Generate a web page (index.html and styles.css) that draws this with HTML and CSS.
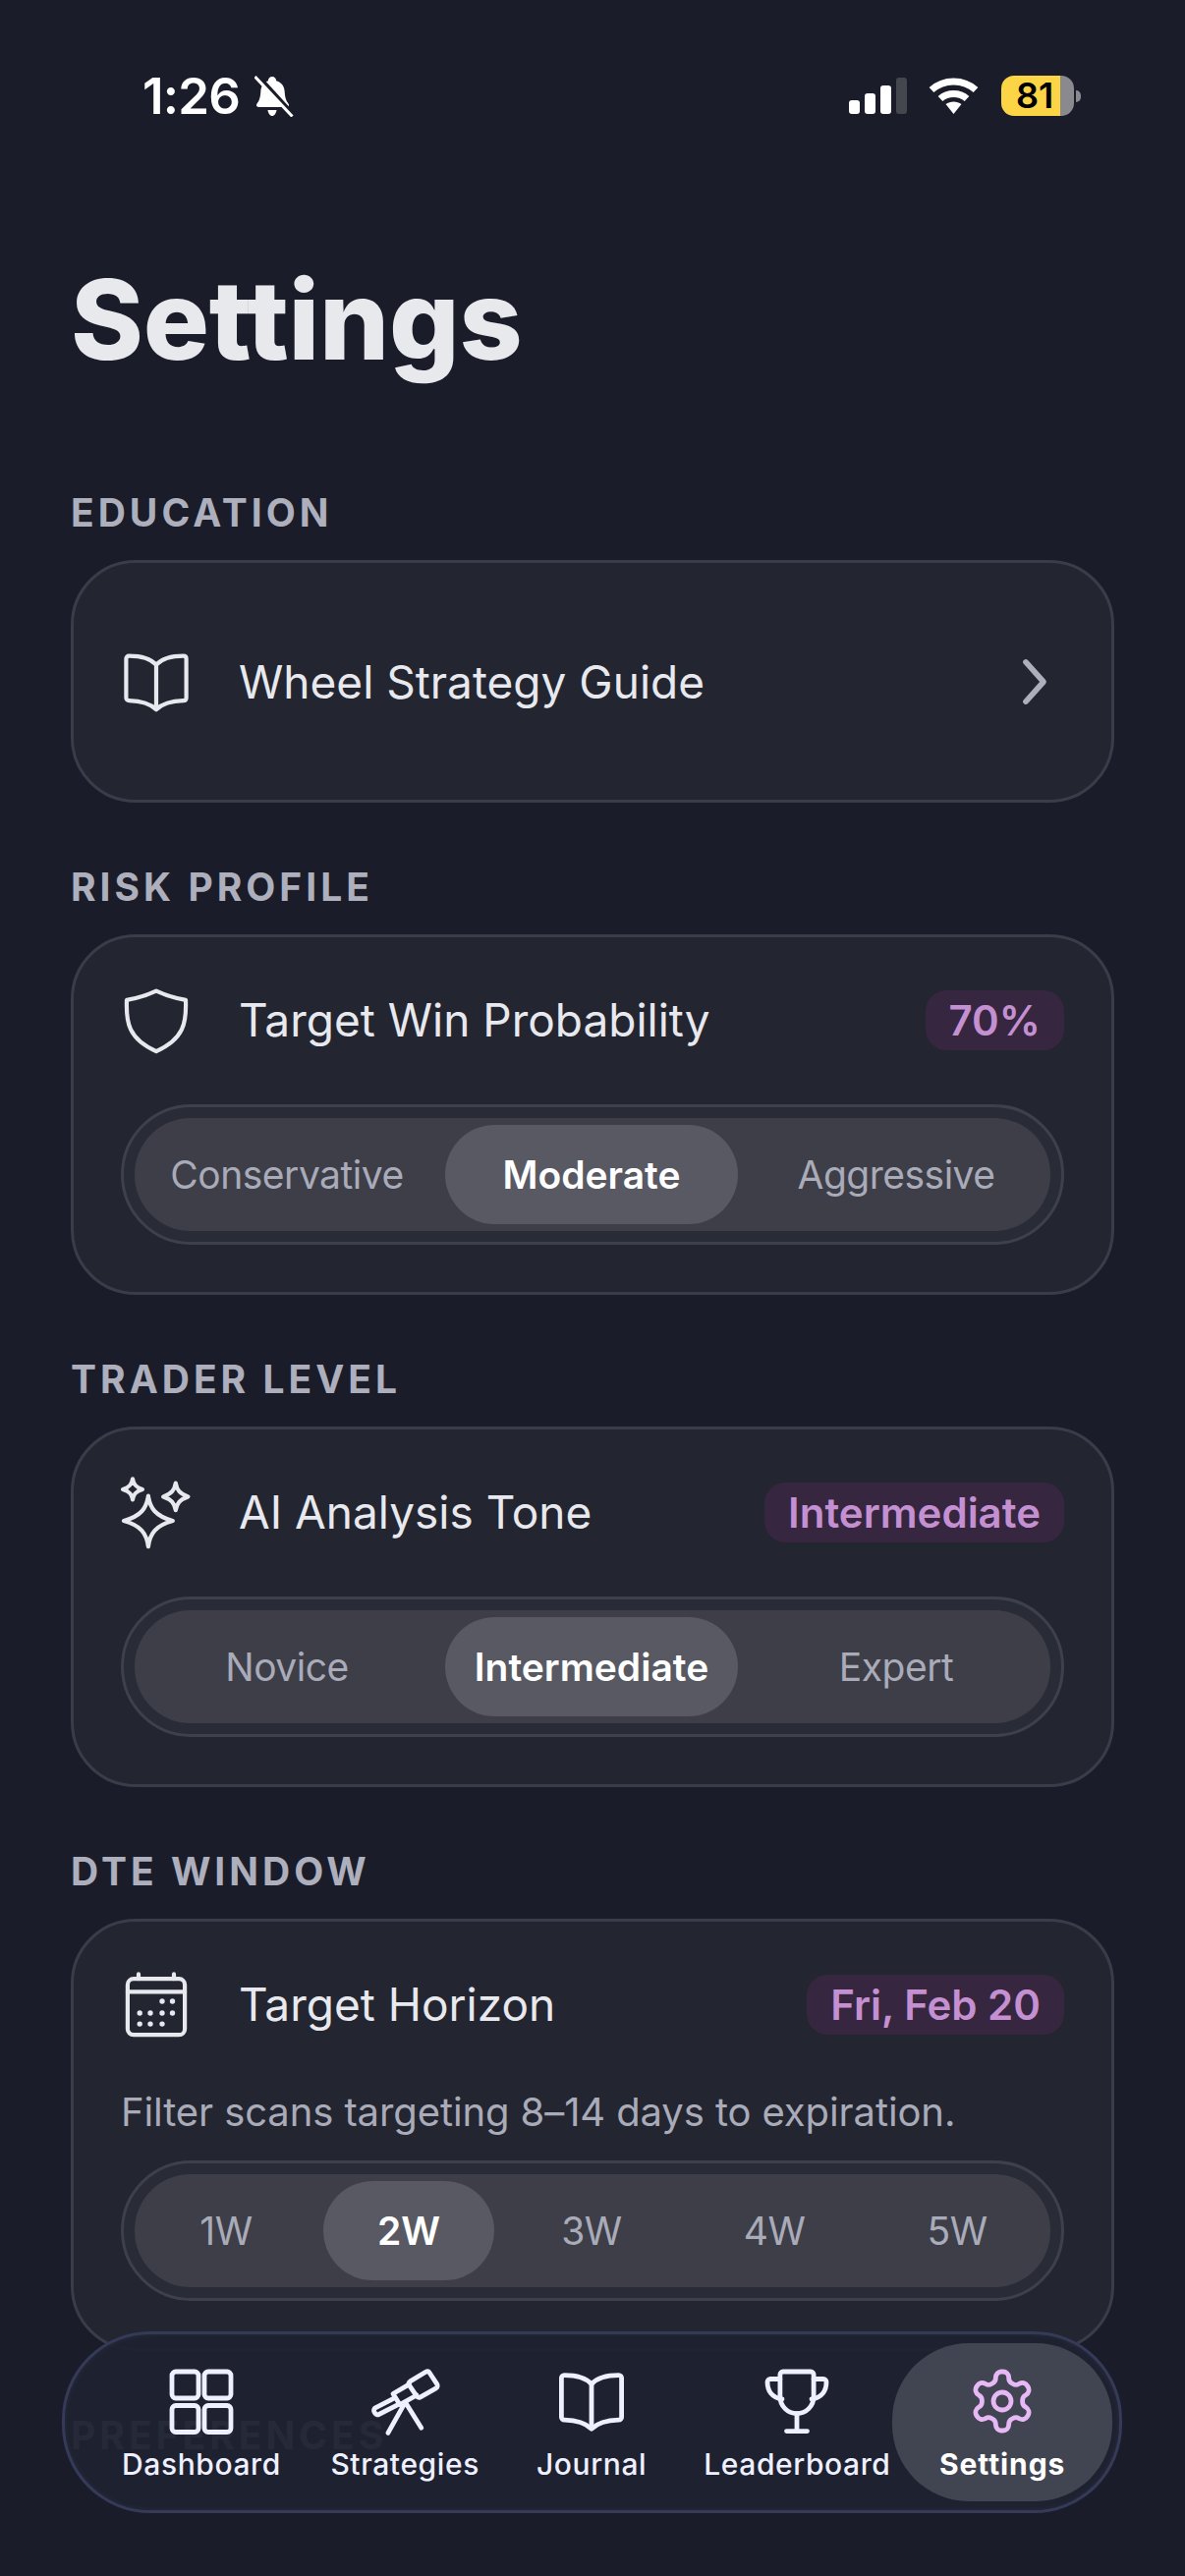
FILE: index.html
```html
<!DOCTYPE html>
<html>
<head>
    <meta charset="UTF-8"/>
    <title>Settings</title>
    <link rel="stylesheet" href="styles.css">
</head>
<body>
<div class="screen">

    <!-- status bar -->
    <div class="status">
        <div class="status-left">
            <span class="time">1:26</span>
            <svg class="bell" viewBox="0 0 40 42">
                <path class="bell-body" d="M18 1c-2.400 0-4 1.800-4.200 4.200C8.800 7 6.600 11 6.300 16.500c-.3 5-1 8.600-3.800 12.100-1.200 1.600-.4 3.400 1.600 3.400h28.800c2 0 2.800-1.800 1.600-3.400-2.800-3.500-3.500-7.100-3.800-12.100C30.400 11 28 7 22.200 5.200 22 2.800 20.400 1 18 1zM13.500 35c.4 3.300 2.300 6 4.500 6s4.100-2.700 4.500-6z"/>
                <path class="bell-cut" d="M3.500 0L41 41"/>
                <path class="bell-line" d="M.5 1l38 40.500"/>
            </svg>
        </div>
        <div class="status-right">
            <div class="signal">
                <span class="bar bar-1"></span>
                <span class="bar bar-2"></span>
                <span class="bar bar-3"></span>
                <span class="bar bar-4"></span>
            </div>
            <svg class="wifi" viewBox="0 0 51 37">
                <path d="M3 12.500C15.500 1 35.500 1 48 12.500" class="wifi-arc"/>
                <path d="M12 21.500c7.500-6.700 19.500-6.700 27 0" class="wifi-arc"/>
                <path d="M25.500 37l-8-10c4.500-3.500 11.500-3.500 16 0z" fill="#fff"/>
            </svg>
            <div class="battery">
                <div class="battery-body">81</div>
                <span class="battery-nub"></span>
            </div>
        </div>
    </div>

    <h1 class="title">Settings</h1>

    <div class="section">
        <div class="section-label">EDUCATION</div>
        <div class="card card-link">
            <div class="row">
                <svg class="icon" viewBox="0 0 24 24">
                    <path d="M1.800 4.200c0-.6.400-1 1-1 3.800 0 7 .6 9.200 3 2.200-2.400 5.400-3 9.200-3 .6 0 1 .4 1 1v13.200c0 .6-.4 1-1 1-3.800.1-6.800.7-9.200 3-2.400-2.300-5.400-2.900-9.200-3-.6 0-1-.4-1-1z"/>
                    <path d="M12 6.200v15"/>
                </svg>
                <span class="row-title">Wheel Strategy Guide</span>
                <svg class="chevron" viewBox="0 0 20 20"><path d="M7 3.300L13 10l-6 6.700"/></svg>
            </div>
        </div>
    </div>

    <div class="section">
        <div class="section-label">RISK PROFILE</div>
        <div class="card">
            <div class="row">
                <svg class="icon" viewBox="0 0 24 24">
                    <path d="M12 2.200c3 1.400 6 2.400 10 3.100.3 7.700-.6 13.200-10 17.400C2.600 18.500 1.700 13 2 5.300c4-.7 7-1.700 10-3.100z"/>
                </svg>
                <span class="row-title">Target Win Probability</span>
                <span class="badge">70%</span>
            </div>
            <div class="seg">
                <div class="seg-track">
                    <span class="seg-item">Conservative</span>
                    <span class="seg-item active">Moderate</span>
                    <span class="seg-item">Aggressive</span>
                </div>
            </div>
        </div>
    </div>

    <div class="section">
        <div class="section-label">TRADER LEVEL</div>
        <div class="card">
            <div class="row">
                <svg class="icon" viewBox="0 0 24 24">
                    <path d="M9.300 6.500c.6 4.300 2.500 6.900 8.300 8.500-5.800 1.600-7.700 4.200-8.300 8.700-.6-4.500-2.500-7.100-8.300-8.700 5.800-1.600 7.700-4.200 8.300-8.500z"/>
                    <path d="M4 .8c.3 1.800 1 2.800 3.300 3.500C5 5 4.300 6 4 7.800 3.700 6 3 5 .7 4.300 3 3.600 3.700 2.600 4 .8z"/>
                    <path d="M18.600 2.200c.4 2.300 1.300 3.600 4.200 4.600-2.900 1-3.800 2.300-4.200 4.600-.4-2.300-1.300-3.600-4.200-4.600 2.900-1 3.800-2.300 4.200-4.600z"/>
                </svg>
                <span class="row-title">AI Analysis Tone</span>
                <span class="badge">Intermediate</span>
            </div>
            <div class="seg">
                <div class="seg-track">
                    <span class="seg-item">Novice</span>
                    <span class="seg-item active">Intermediate</span>
                    <span class="seg-item">Expert</span>
                </div>
            </div>
        </div>
    </div>

    <div class="section">
        <div class="section-label">DTE WINDOW</div>
        <div class="card">
            <div class="row">
                <svg class="icon" viewBox="0 0 24 24">
                    <rect x="2.300" y="3.400" width="19.400" height="19" rx="2"/>
                    <path d="M2.300 7.800h19.400M6 1.800v1.600M18 1.800v1.600"/>
                    <g class="dots">
                        <circle cx="14" cy="11" r=".9"/><circle cx="17.500" cy="11" r=".9"/>
                        <circle cx="6.400" cy="15" r=".9"/><circle cx="10" cy="15" r=".9"/><circle cx="14" cy="15" r=".9"/><circle cx="17.500" cy="15" r=".9"/>
                        <circle cx="6.400" cy="18.700" r=".9"/><circle cx="10" cy="18.700" r=".9"/><circle cx="14" cy="18.700" r=".9"/>
                    </g>
                </svg>
                <span class="row-title">Target Horizon</span>
                <span class="badge">Fri, Feb 20</span>
            </div>
            <p class="hint">Filter scans targeting 8–14 days to expiration.</p>
            <div class="seg">
                <div class="seg-track">
                    <span class="seg-item">1W</span>
                    <span class="seg-item active">2W</span>
                    <span class="seg-item">3W</span>
                    <span class="seg-item">4W</span>
                    <span class="seg-item">5W</span>
                </div>
            </div>
        </div>
    </div>

    <div class="section">
        <div class="section-label">PREFERENCES</div>
    </div>

    <!-- floating tab bar -->
    <nav class="tabbar">
        <a class="tab">
            <svg class="tab-icon" viewBox="0 0 24 24">
                <rect x="2" y="2" width="9" height="9" rx="1.300"/>
                <rect x="13" y="2" width="9" height="9" rx="1.300"/>
                <rect x="2" y="13.500" width="9" height="9" rx="1.300"/>
                <rect x="13" y="13.500" width="9" height="9" rx="1.300"/>
            </svg>
            <span>Dashboard</span>
        </a>
        <a class="tab">
            <svg class="tab-icon" viewBox="0 0 24 24">
                <path d="M13.800 5.300l5.300-3.200a1 1 0 0 1 1.300.3l2.500 3.800a1 1 0 0 1-.3 1.400l-5.300 3a1 1 0 0 1-1.300-.3l-2.500-3.700a1 1 0 0 1 .3-1.300z"/>
                <path d="M13.500 6.300L8 9.500l2.300 3.700 5.700-3.200"/>
                <path d="M8 11.200l-6 3.100a1 1 0 0 0-.4 1.300l.3.500a1 1 0 0 0 1.300.4l6.300-3.200"/>
                <path d="M12 12.600L6.300 22.800M12.300 12.600l5.300 8.500"/>
            </svg>
            <span>Strategies</span>
        </a>
        <a class="tab">
            <svg class="tab-icon" viewBox="0 0 24 24">
                <path d="M1.800 4.200c0-.6.400-1 1-1 3.800 0 7 .6 9.200 3 2.200-2.400 5.400-3 9.200-3 .6 0 1 .4 1 1v13.200c0 .6-.4 1-1 1-3.800.1-6.800.7-9.200 3-2.400-2.300-5.400-2.900-9.200-3-.6 0-1-.4-1-1z"/>
                <path d="M12 6.200v15"/>
            </svg>
            <span>Journal</span>
        </a>
        <a class="tab">
            <svg class="tab-icon" viewBox="0 0 24 24">
                <path d="M6.300 3a1 1 0 0 1 1-1h9.400a1 1 0 0 1 1 1v7.500a5.700 5.700 0 0 1-11.400 0z"/>
                <path d="M6.300 4.500H3a1 1 0 0 0-1 1c0 3 1.500 5.300 5 5.800M17.700 4.500H21a1 1 0 0 1 1 1c0 3-1.500 5.300-5 5.800"/>
                <path d="M12 16.200v5.800M8.500 22.200h7"/>
            </svg>
            <span>Leaderboard</span>
        </a>
        <a class="tab tab-active">
            <svg class="tab-icon" viewBox="0 0 24 24">
                <path d="M12.220 2h-.44a2 2 0 0 0-2 2v.18a2 2 0 0 1-1 1.730l-.43.250a2 2 0 0 1-2 0l-.15-.080a2 2 0 0 0-2.730.730l-.22.380a2 2 0 0 0 .730 2.730l.15.100a2 2 0 0 1 1 1.720v.510a2 2 0 0 1-1 1.740l-.15.090a2 2 0 0 0-.730 2.730l.22.380a2 2 0 0 0 2.730.730l.15-.080a2 2 0 0 1 2 0l.43.250a2 2 0 0 1 1 1.730V20a2 2 0 0 0 2 2h.44a2 2 0 0 0 2-2v-.18a2 2 0 0 1 1-1.730l.43-.250a2 2 0 0 1 2 0l.15.080a2 2 0 0 0 2.730-.730l.22-.390a2 2 0 0 0-.730-2.730l-.15-.080a2 2 0 0 1-1-1.740v-.5a2 2 0 0 1 1-1.740l.15-.090a2 2 0 0 0 .730-2.730l-.22-.380a2 2 0 0 0-2.730-.730l-.15.080a2 2 0 0 1-2 0l-.43-.250a2 2 0 0 1-1-1.730V4a2 2 0 0 0-2-2z"/>
                <circle cx="12" cy="12" r="3"/>
            </svg>
            <span>Settings</span>
        </a>
    </nav>
</div>
</body>
</html>
```

FILE: styles.css
```css
* {
    box-sizing: border-box;
}

body {
    margin: 0;
    background: #1a1d29;
    font-family: Inter, "Noto Sans", sans-serif;
    color: #e8e9ee;
}

.screen {
    position: relative;
    width: 1206px;
    height: 2622px;
    overflow: hidden;
    padding: 0 72px;
}

/* status bar */
.status {
    display: flex;
    justify-content: space-between;
    align-items: center;
    height: 41px;
    margin: 77px 34px 0 73px;
}

.status-left {
    display: flex;
    align-items: center;
    gap: 15px;
}

.time {
    font-size: 51px;
    font-weight: 600;
    line-height: 41px;
    color: #fff;
    letter-spacing: -0.8px;
}

.bell {
    width: 40px;
    height: 42px;
}

.bell-body {
    fill: #fff;
}

.bell-cut {
    stroke: #1a1d29;
    stroke-width: 4;
}

.bell-line {
    stroke: #fff;
    stroke-width: 3;
}

.status-right {
    display: flex;
    align-items: center;
}

.signal {
    display: flex;
    align-items: flex-end;
    gap: 5px;
    height: 37px;
    margin-right: 22px;
}

.bar {
    width: 11px;
    border-radius: 3px;
    background: #fff;
}

.bar-1 { height: 14px; }
.bar-2 { height: 21px; }
.bar-3 { height: 29px; }
.bar-4 { height: 37px; background: #45474f; }

.wifi {
    width: 51px;
    height: 37px;
    margin-right: 23px;
}

.wifi-arc {
    fill: none;
    stroke: #fff;
    stroke-width: 7;
}

.battery {
    display: flex;
    align-items: center;
    gap: 2px;
}

.battery-body {
    width: 74px;
    height: 41px;
    padding-left: 15px;
    border-radius: 13px;
    background: linear-gradient(90deg, #fbd545 60px, #8a8a8e 60px);
    font-size: 36px;
    font-weight: 600;
    line-height: 41px;
    color: #000;
}

.battery-nub {
    width: 5px;
    height: 12px;
    border-radius: 0 5px 5px 0;
    background: #8a8a8e;
}

/* title */
.title {
    margin: 0 0 113px;
    padding-top: 147px;
    font-size: 112px;
    font-weight: 800;
    line-height: 120px;
    letter-spacing: -0.2px;
    color: #e8e9ed;
}

.section {
    margin-bottom: 62px;
}

.section-label {
    margin-bottom: 24px;
    font-size: 39px;
    font-weight: 700;
    line-height: 48px;
    letter-spacing: 4px;
    color: #adafbd;
}

.card {
    padding: 48px;
    border: 3px solid #3a3c49;
    border-radius: 66px;
    background: #232530;
}

.card-link {
    padding-top: 84.5px;
    padding-bottom: 84.5px;
}

.row {
    display: flex;
    align-items: center;
    height: 72px;
}

.icon {
    flex: none;
    width: 72px;
    height: 72px;
    margin-right: 48px;
    fill: none;
    stroke: #e8e9ee;
    stroke-width: 1.400;
    stroke-linecap: round;
    stroke-linejoin: round;
    overflow: visible;
}

.dots {
    fill: #e8e9ee;
    stroke: none;
}

.row-title {
    flex: 1;
    font-size: 46px;
    font-weight: 400;
}

.chevron {
    width: 60px;
    height: 60px;
    fill: none;
    stroke: #adafbd;
    stroke-width: 1.900;
    stroke-linecap: round;
    stroke-linejoin: round;
}

.badge {
    height: 61px;
    padding: 0 24px;
    border-radius: 21px;
    background: #36263f;
    font-size: 42px;
    font-weight: 600;
    line-height: 61px;
    color: #c490d1;
}

.hint {
    margin: 50px 0 0;
    font-size: 40px;
    line-height: 48px;
    letter-spacing: -0.1px;
    color: #a9abb9;
}

.seg {
    margin-top: 50px;
    padding: 11px;
    border: 3px solid #3e404c;
    border-radius: 72px;
    background: #292c37;
}

.hint + .seg {
    margin-top: 25px;
}

.seg-track {
    display: flex;
    gap: 12px;
    padding: 7px 8px 7px 6px;
    border-radius: 57px;
    background: #3d3e48;
}

.seg-item {
    flex: 1;
    height: 101px;
    border-radius: 51px;
    font-size: 39px;
    line-height: 101px;
    letter-spacing: -0.5px;
    text-align: center;
    color: #a9abb9;
}

.seg-item.active {
    background: #585962;
    font-weight: 600;
    letter-spacing: 0;
    color: #fff;
}

/* tab bar sits over the scrolling content */
.tabbar {
    position: absolute;
    left: 63px;
    top: 2373px;
    display: flex;
    align-items: stretch;
    width: 1079px;
    height: 185px;
    padding: 9px;
    border: 3px solid #343a58;
    border-radius: 90px;
    background: rgba(31, 34, 48, 0.95);
    box-shadow: inset 0 0 6px rgba(255, 255, 255, 0.05);
}

.tab {
    display: flex;
    flex: none;
    flex-direction: column;
    align-items: center;
    padding: 23px 29px 0;
    font-size: 30px;
    font-weight: 500;
    line-height: 40px;
    letter-spacing: 0.6px;
    color: #eef0ff;
}

.tab:first-child {
    padding-left: 49px;
    padding-right: 21.5px;
}

.tab-icon {
    width: 72px;
    height: 72px;
    margin-bottom: 8px;
    fill: none;
    stroke: #eef0ff;
    stroke-width: 1.600;
    stroke-linecap: round;
    stroke-linejoin: round;
}

.tab-active {
    margin-left: -27.5px;
    padding-left: 48px;
    padding-right: 48px;
    border-radius: 78px;
    background: #414451;
    font-weight: 700;
    letter-spacing: 0.9px;
    color: #fff;
}

.tab-active .tab-icon {
    stroke: #e6b8f5;
}
```
